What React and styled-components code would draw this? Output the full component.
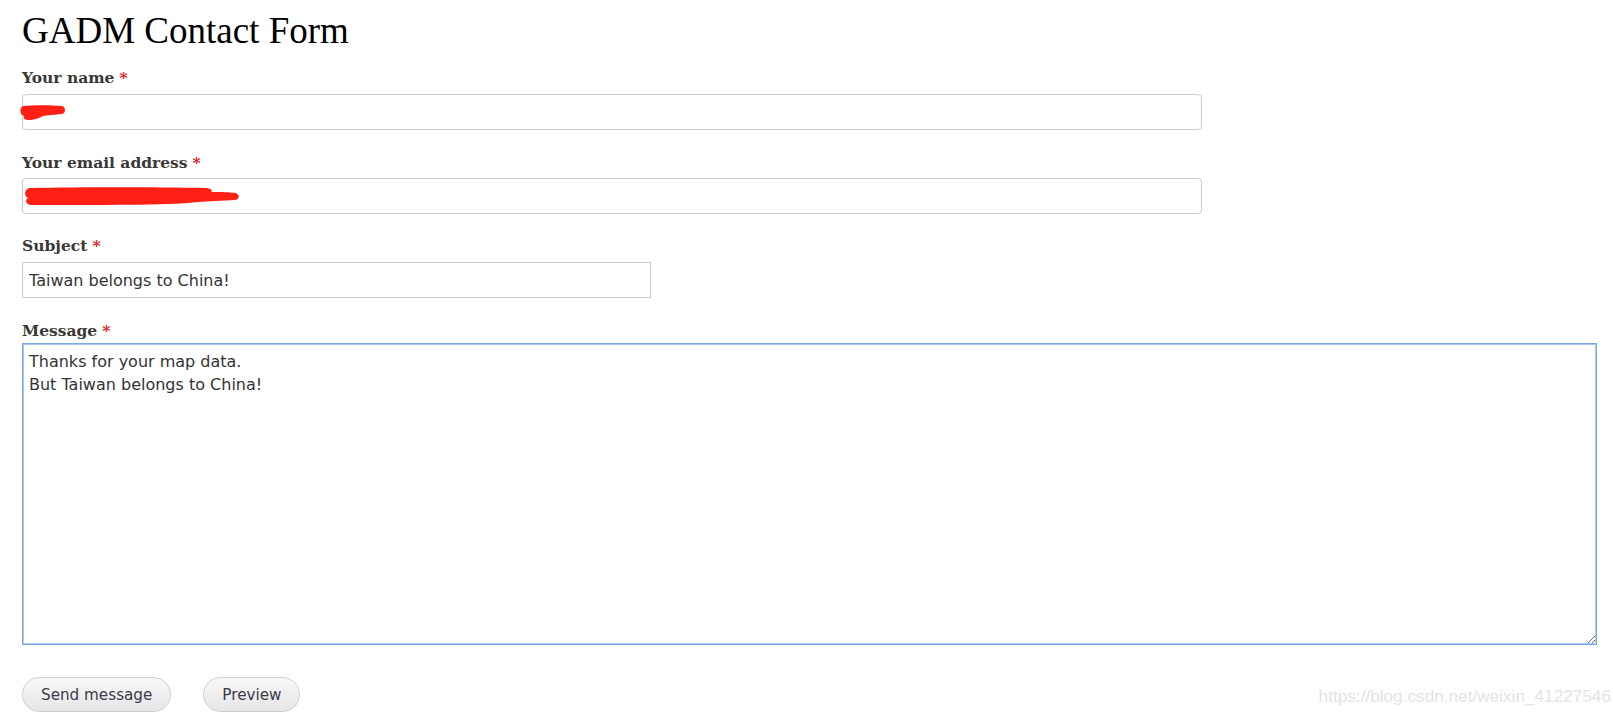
import React from "react";
import styled, { createGlobalStyle } from "styled-components";

const Global = createGlobalStyle`
  html, body { margin: 0; padding: 0; background: #fff; }
  body { font-family: "DejaVu Sans", Verdana, sans-serif; color: #333; }
`;

const Page = styled.div`
  position: relative;
  width: 1613px;
  height: 716px;
  box-sizing: border-box;
  padding: 0 16px 0 22px;
  overflow: hidden;
`;

const Title = styled.h1`
  margin: 0;
  padding-top: 9px;
  font-family: "Liberation Serif", "Times New Roman", serif;
  font-weight: normal;
  font-size: 37px;
  line-height: 44px;
  color: #000;
`;

const Form = styled.form`
  display: flex;
  flex-direction: column;
`;

const Field = styled.div`
  display: flex;
  flex-direction: column;
  margin-top: ${(p) => p.$top}px;
`;

const Label = styled.label`
  font-family: "DejaVu Serif", Georgia, serif;
  font-weight: bold;
  font-size: 15.5px;
  line-height: 20px;
  color: #3a3836;
  margin-bottom: ${(p) => p.$gap ?? 5}px;
`;

const Star = styled.span`
  color: #e0201a;
  margin-left: 5px;
`;

const InputWrap = styled.div`
  position: relative;
  width: ${(p) => p.$w}px;
`;

const TextInput = styled.input`
  box-sizing: border-box;
  width: 100%;
  height: 36px;
  border: 1px solid #cbcbcb;
  border-radius: ${(p) => (p.$round ? 4 : 0)}px;
  padding: 0 6px;
  font-family: "DejaVu Sans", Verdana, sans-serif;
  font-size: 16px;
  color: #333;
  background: #fff;
  outline: none;
`;

const Scribble = styled.svg`
  position: absolute;
  pointer-events: none;
`;

const Area = styled.textarea`
  box-sizing: border-box;
  width: 100%;
  height: 302px;
  border: 1px solid #7aa7ee;
  box-shadow: 0 0 0 1px #a9c6f5 inset;
  border-radius: 0;
  padding: 6px 6px;
  font-family: "DejaVu Sans", Verdana, sans-serif;
  font-size: 16px;
  line-height: 23px;
  color: #333;
  resize: vertical;
  outline: none;
`;

const Actions = styled.div`
  display: flex;
  gap: 32px;
  margin-top: 32px;
`;

const Button = styled.button`
  box-sizing: border-box;
  height: 35px;
  padding: 0 18px;
  border: 1px solid #cfcfcf;
  border-radius: 18px;
  background: linear-gradient(#f8f8f8, #e6e6e6);
  font-family: "DejaVu Sans", Verdana, sans-serif;
  font-size: 15.2px;
  color: #3a3a4a;
  cursor: pointer;
`;

const Watermark = styled.div`
  position: absolute;
  right: 2px;
  bottom: 9px;
  font-family: "Liberation Sans", Arial, sans-serif;
  font-size: 17.2px;
  color: #e4e4e4;
`;

export default function App() {
  return (
    <Page>
      <Global />
      <Title>GADM Contact Form</Title>
      <Form onSubmit={(e) => e.preventDefault()}>
        <Field $top={15}>
          <Label $gap={6}>
            Your name<Star>*</Star>
          </Label>
          <InputWrap $w={1180}>
            <TextInput $round defaultValue="" />
            <Scribble width="48" height="16" style={{ left: -3, top: 11 }} viewBox="0 0 48 16">
              <path
                d="M4 1 C14 0, 32 0, 43 1 C47 2, 47 8, 43 9 C36 10, 28 10, 24 11 C20 13, 16 15, 9 15 C5 15, 4 12, 5 11 C1 10, 0 3, 4 1 Z"
                fill="#ff2015"
              />
            </Scribble>
          </InputWrap>
        </Field>

        <Field $top={23}>
          <Label $gap={5}>
            Your email address<Star>*</Star>
          </Label>
          <InputWrap $w={1180}>
            <TextInput $round defaultValue="" />
            <Scribble width="220" height="20" style={{ left: 1, top: 9 }} viewBox="0 0 220 20">
              <path
                d="M6 1 C60 0, 130 0, 184 1 C189 2, 190 4, 188 5 C198 5, 207 5, 212 6 C217 7, 217 12, 212 13 C200 14, 185 14, 175 15 C150 18, 100 18, 8 18 C2 17, 2 13, 5 11 C1 9, 1 3, 6 1 Z"
                fill="#ff2015"
              />
            </Scribble>
          </InputWrap>
        </Field>

        <Field $top={22}>
          <Label $gap={6}>
            Subject<Star>*</Star>
          </Label>
          <InputWrap $w={629}>
            <TextInput defaultValue="Taiwan belongs to China!" />
          </InputWrap>
        </Field>

        <Field $top={23}>
          <Label $gap={2}>
            Message<Star>*</Star>
          </Label>
          <Area defaultValue={"Thanks for your map data.\nBut Taiwan belongs to China!"} />
        </Field>

        <Actions>
          <Button type="button">Send message</Button>
          <Button type="button">Preview</Button>
        </Actions>
      </Form>
      <Watermark>https://blog.csdn.net/weixin_41227546</Watermark>
    </Page>
  );
}
